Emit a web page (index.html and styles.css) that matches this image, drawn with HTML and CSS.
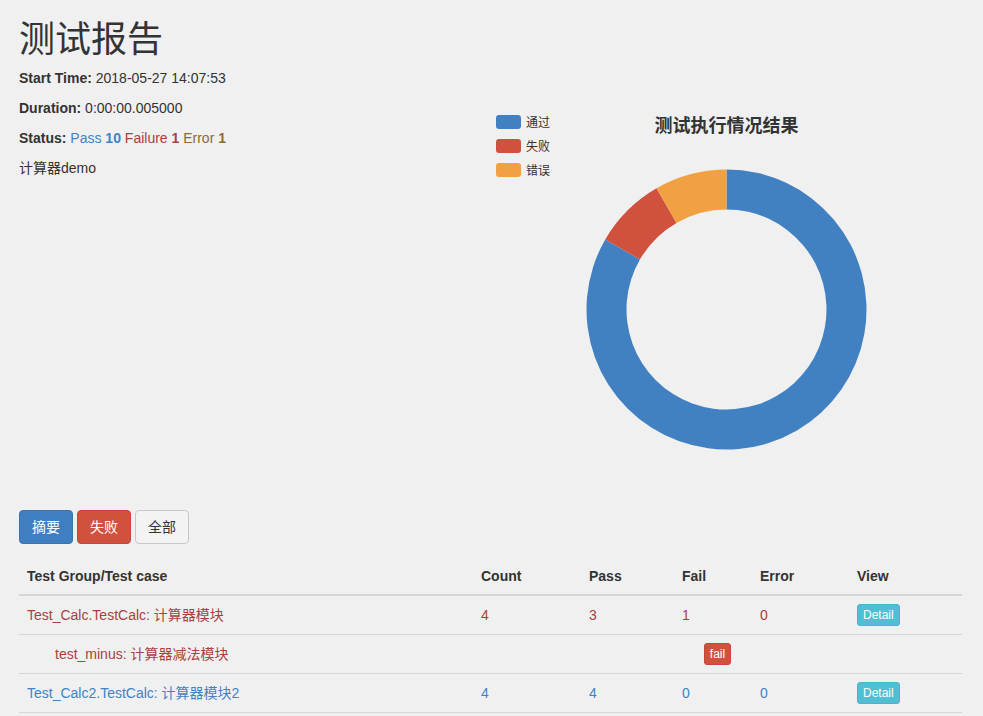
FILE: index.html
```html
<!DOCTYPE html>
<html lang="zh-CN">
<head>
<meta charset="utf-8">
<title>测试报告</title>
<link rel="stylesheet" href="styles.css">
</head>
<body>
<div class="page">
  <div class="top">
    <div class="info">
      <h1>测试报告</h1>
      <p><strong>Start Time:</strong> 2018-05-27 14:07:53</p>
      <p><strong>Duration:</strong> 0:00:00.005000</p>
      <p><strong>Status:</strong> <span class="t-pass">Pass <strong>10</strong></span> <span class="t-fail">Failure <strong>1</strong></span> <span class="t-error">Error <strong>1</strong></span></p>
      <p>计算器demo</p>
    </div>
    <div class="chart">
      <svg class="chart-svg" width="471" height="470" viewBox="0 0 471 470" xmlns="http://www.w3.org/2000/svg">
        <rect x="5" y="95" width="25" height="14" rx="3" fill="#4181c2"/>
        <rect x="5" y="119" width="25" height="14" rx="3" fill="#d1513f"/>
        <rect x="5" y="143" width="25" height="14" rx="3" fill="#f1a141"/>
        <text class="legend-text" x="35" y="106.5">通过</text>
        <text class="legend-text" x="35" y="130.5">失败</text>
        <text class="legend-text" x="35" y="154.5">错误</text>
        <text class="chart-title" x="235.5" y="111.5" text-anchor="middle">测试执行情况结果</text>
        <path fill="#4181c2" d="M 235.5 149.5 A 140 140 0 1 1 114.26 219.5 L 148.9 239.5 A 100 100 0 1 0 235.5 189.5 Z"/>
        <path fill="#d1513f" d="M 114.26 219.5 A 140 140 0 0 1 165.5 168.26 L 185.5 202.9 A 100 100 0 0 0 148.9 239.5 Z"/>
        <path fill="#f1a141" d="M 165.5 168.26 A 140 140 0 0 1 235.5 149.5 L 235.5 189.5 A 100 100 0 0 0 185.5 202.9 Z"/>
      </svg>
    </div>
  </div>
  <div class="filters">
    <button class="btn btn-primary">摘要</button>
    <button class="btn btn-danger">失败</button>
    <button class="btn btn-default">全部</button>
  </div>
  <table class="result">
    <colgroup>
      <col class="c-name"><col class="c-count"><col class="c-pass"><col class="c-fail"><col class="c-error"><col class="c-view">
    </colgroup>
    <thead>
      <tr><th>Test Group/Test case</th><th>Count</th><th>Pass</th><th>Fail</th><th>Error</th><th>View</th></tr>
    </thead>
    <tbody>
      <tr class="row-fail">
        <td>Test_Calc.TestCalc: 计算器模块</td><td>4</td><td>3</td><td>1</td><td>0</td>
        <td><button class="btn-xs btn-info">Detail</button></td>
      </tr>
      <tr class="row-fail">
        <td><div class="testcase">test_minus: 计算器减法模块</div></td>
        <td colspan="5" class="center"><button class="btn-xs btn-danger">fail</button></td>
      </tr>
      <tr class="row-pass">
        <td>Test_Calc2.TestCalc: 计算器模块2</td><td>4</td><td>4</td><td>0</td><td>0</td>
        <td><button class="btn-xs btn-info">Detail</button></td>
      </tr>
    </tbody>
  </table>
</div>
</body>
</html>
```

FILE: styles.css
```css
html, body {
  margin: 0;
  padding: 0;
  background: #f0f0f0;
}

body {
  font-family: "Liberation Sans", Arial, "Noto Sans CJK SC", sans-serif;
  font-size: 14px;
  line-height: 20px;
  color: #333333;
}

.page {
  padding: 0 21px 0 19px;
}

.top {
  display: flex;
  align-items: flex-start;
}

.info {
  width: 472px;
  flex: none;
}

h1 {
  margin: 20px 0 8px;
  font-size: 36px;
  line-height: 39.6px;
  font-weight: normal;
  color: #333333;
}

p {
  margin: 0 0 10px;
}

strong {
  font-weight: bold;
}

.t-pass { color: #3f83c6; }
.t-fail { color: #a8413f; }
.t-error { color: #8f6a34; }

.chart {
  width: 471px;
  flex: none;
}

.chart-svg {
  display: block;
  margin-top: 20px;
}

.legend-text {
  font-family: "Noto Sans CJK SC", sans-serif;
  font-size: 12px;
  fill: #333333;
}

.chart-title {
  font-family: "Noto Sans CJK SC", sans-serif;
  font-size: 18px;
  font-weight: bold;
  fill: #333333;
}

.filters {
  display: flex;
  gap: 4px;
  margin-top: 20px;
}

.btn {
  font-family: "Liberation Sans", Arial, "Noto Sans CJK SC", sans-serif;
  font-size: 14px;
  line-height: 20px;
  padding: 6px 12px;
  border: 1px solid transparent;
  border-radius: 4px;
  cursor: pointer;
}

.btn-primary {
  background: #3f7fc1;
  border-color: #3a73ae;
  color: #ffffff;
}

.btn-danger {
  background: #d1513f;
  border-color: #c9443a;
  color: #ffffff;
}

.btn-default {
  background: #f3f3f3;
  border-color: #c8c8c8;
  color: #333333;
}

.result {
  width: 943px;
  margin-top: 14px;
  border-collapse: collapse;
  table-layout: fixed;
}

.c-name { width: 454px; }
.c-count { width: 108px; }
.c-pass { width: 93px; }
.c-fail { width: 78px; }
.c-error { width: 97px; }
.c-view { width: 113px; }

.result th {
  text-align: left;
  font-weight: bold;
  padding: 8px;
  line-height: 20px;
  border-bottom: 2px solid #d6d6d6;
}

.result td {
  padding: 8px;
  line-height: 20px;
  height: 22px;
  box-sizing: content-box;
  border-top: 1px solid #d6d6d6;
  border-bottom: 1px solid #d6d6d6;
  vertical-align: middle;
}

.result td.center {
  text-align: center;
}

.row-fail td { color: #a8413f; }
.row-pass td { color: #3f83c6; }

.testcase {
  margin-left: 28px;
}

.btn-xs {
  display: inline-block;
  font-family: "Liberation Sans", Arial, sans-serif;
  font-size: 12px;
  line-height: 18px;
  padding: 1px 5px;
  border: 1px solid transparent;
  border-radius: 3px;
  color: #ffffff;
  cursor: pointer;
  vertical-align: top;
}

.btn-xs.btn-info {
  background: #52bed4;
  border-color: #46b5cf;
}

.btn-xs.btn-danger {
  background: #d1513f;
  border-color: #c9443a;
}
```
